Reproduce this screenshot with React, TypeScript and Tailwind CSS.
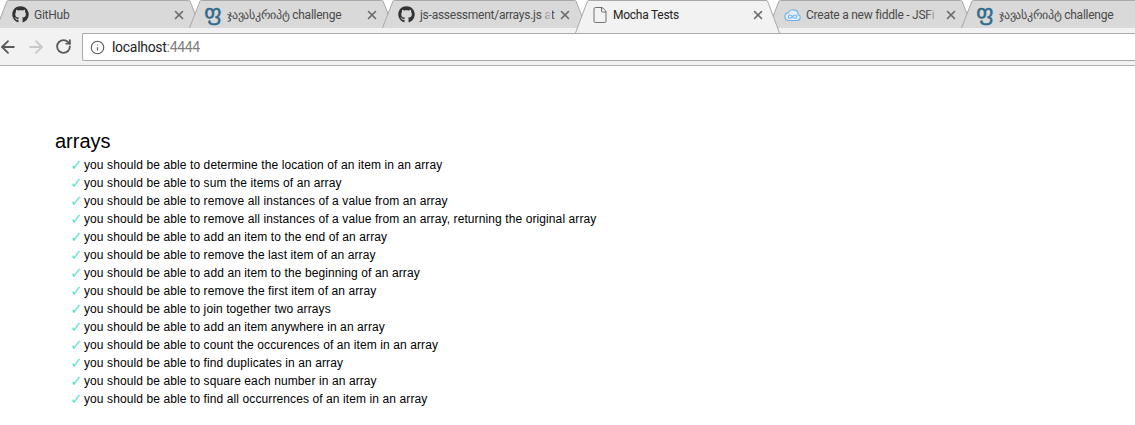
import { ArrowLeft, ArrowRight, File, Info, RotateCw, X } from "lucide-react";
import { FaGithub } from "react-icons/fa";

const tests = [
  "you should be able to determine the location of an item in an array",
  "you should be able to sum the items of an array",
  "you should be able to remove all instances of a value from an array",
  "you should be able to remove all instances of a value from an array, returning the original array",
  "you should be able to add an item to the end of an array",
  "you should be able to remove the last item of an array",
  "you should be able to add an item to the beginning of an array",
  "you should be able to remove the first item of an array",
  "you should be able to join together two arrays",
  "you should be able to add an item anywhere in an array",
  "you should be able to count the occurences of an item in an array",
  "you should be able to find duplicates in an array",
  "you should be able to square each number in an array",
  "you should be able to find all occurrences of an item in an array",
];

function GeorgianIcon() {
  return (
    <span className="mt-[-3px] flex h-4 w-4 items-center justify-center font-['DejaVu_Sans',sans-serif] text-[21px] leading-none text-[#2f6b8a] [-webkit-text-stroke:0.5px_#2f6b8a]">
      ფ
    </span>
  );
}

function GithubIcon() {
  return <FaGithub size={17} className="text-[#333333]" />;
}

function FiddleIcon() {
  return (
    <svg width="17" height="16" viewBox="0 0 17 16" fill="none" stroke="#6db3e8" strokeWidth="1.1">
      <path d="M4 13.5h9.2a3 3 0 0 0 .8-5.9 3.6 3.6 0 0 0-4-4.4A4.2 4.2 0 0 0 4.6 5.6 4 4 0 0 0 4 13.5z" fill="#e4eef6" />
      <path d="M8.5 9.7c-1-1.3-1.7-1.7-2.5-1.7a1.6 1.6 0 0 0 0 3.3c.8 0 1.5-.4 2.5-1.6 1 1.2 1.7 1.6 2.5 1.6a1.6 1.6 0 0 0 0-3.3c-.8 0-1.5.4-2.5 1.7z" />
    </svg>
  );
}

function TabShape({ active }: { active: boolean }) {
  const h = active ? 33 : 28;
  const slant = active ? 12 : 10.5;
  const d = `M0.5 ${h} L${slant + 0.5} 1 Q${slant + 1} 0.5 ${slant + 2} 0.5 H${203 - slant} Q${204 - slant} 0.5 ${204.5 - slant} 1 L204.5 ${h}`;
  return (
    <svg className="absolute left-0 top-0" width="205" height={h} viewBox={`0 0 205 ${h}`}>
      <path d={d} fill={active ? "#f2f2f2" : "#d9d9d9"} stroke="none" />
      <path d={d} fill="none" stroke="#a8a8a8" strokeWidth="1" />
    </svg>
  );
}

function Tab({
  icon,
  title,
  active = false,
}: {
  icon: React.ReactNode;
  title: string;
  active?: boolean;
}) {
  return (
    <div
      className={
        active
          ? "relative z-10 mr-[-12px] h-[33px] w-[205px] shrink-0"
          : "relative mr-[-12px] h-[28px] w-[205px] shrink-0"
      }
    >
      <TabShape active={active} />
      <div className="relative flex h-[29px] items-center pl-[16px]">
        <div className="flex w-[22px] shrink-0 items-center">{icon}</div>
        <div className="relative w-[132px] shrink-0 whitespace-nowrap font-['Roboto',sans-serif] text-[12px] tracking-[-0.25px]">
          <span className={active ? "text-[#222222]" : "text-[#4a4a4a]"}>{title}</span>
          {!active && (
            <div className="absolute right-0 top-0 h-full w-3 bg-gradient-to-r from-transparent to-[#d9d9d9]" />
          )}
        </div>
        <X size={14} strokeWidth={2.8} className="ml-[6px] text-[#6a6a6a]" />
      </div>
    </div>
  );
}

export default function App() {
  return (
    <div className="h-[425px] w-[1135px] overflow-hidden bg-white">
      <div className="relative z-10 ml-[-4px] flex h-[28px]">
        <Tab icon={<GithubIcon />} title="GitHub" />
        <Tab icon={<GeorgianIcon />} title="ჯავასკრიპტ challenge" />
        <Tab icon={<GithubIcon />} title="js-assessment/arrays.js at" />
        <Tab icon={<File size={18} strokeWidth={1.1} className="text-[#555555]" />} title="Mocha Tests" active />
        <Tab icon={<FiddleIcon />} title="Create a new fiddle - JSFi" />
        <Tab icon={<GeorgianIcon />} title="ჯავასკრიპტ challenge" />
      </div>

      <div className="flex h-[38px] items-start border-b border-[#b5b5b5] bg-[#f2f2f2] pt-[5px]">
        <div className="flex h-[27px] w-[82px] shrink-0 items-center text-[#5a5a5a]">
          <ArrowLeft size={20} strokeWidth={2.2} className="ml-[-2px]" />
          <ArrowRight size={20} strokeWidth={2.2} className="ml-[8px] text-[#c9c9c9]" />
          <RotateCw size={17} strokeWidth={2.6} className="ml-[9px]" />
        </div>
        <div className="flex h-[28px] grow items-center rounded-l-[2px] border border-r-0 border-[#a9a9a9] bg-white pl-[7px]">
          <Info size={15} strokeWidth={1.8} className="text-[#5a5a5a]" />
          <div className="ml-[7px] font-['Roboto',sans-serif] text-[14px] tracking-[-0.3px] text-[#222222]">
            localhost<span className="text-[#808080]">:4444</span>
          </div>
        </div>
      </div>

      <div className="pl-[55px] pt-[64px] font-['Liberation_Sans',sans-serif] text-black">
        <h1 className="text-[20px] leading-[23px]">arrays</h1>
        <ul className="mt-[3px]">
          {tests.map((t) => (
            <li key={t} className="flex h-[18px] items-center pl-[16px] text-[12px] tracking-[0.1px]">
              <span className="ml-[-1px] w-[14px] font-['DejaVu_Sans',sans-serif] text-[15px] leading-none text-[#5fe0cc]">✓</span>
              <span>{t}</span>
            </li>
          ))}
        </ul>
      </div>
    </div>
  );
}
